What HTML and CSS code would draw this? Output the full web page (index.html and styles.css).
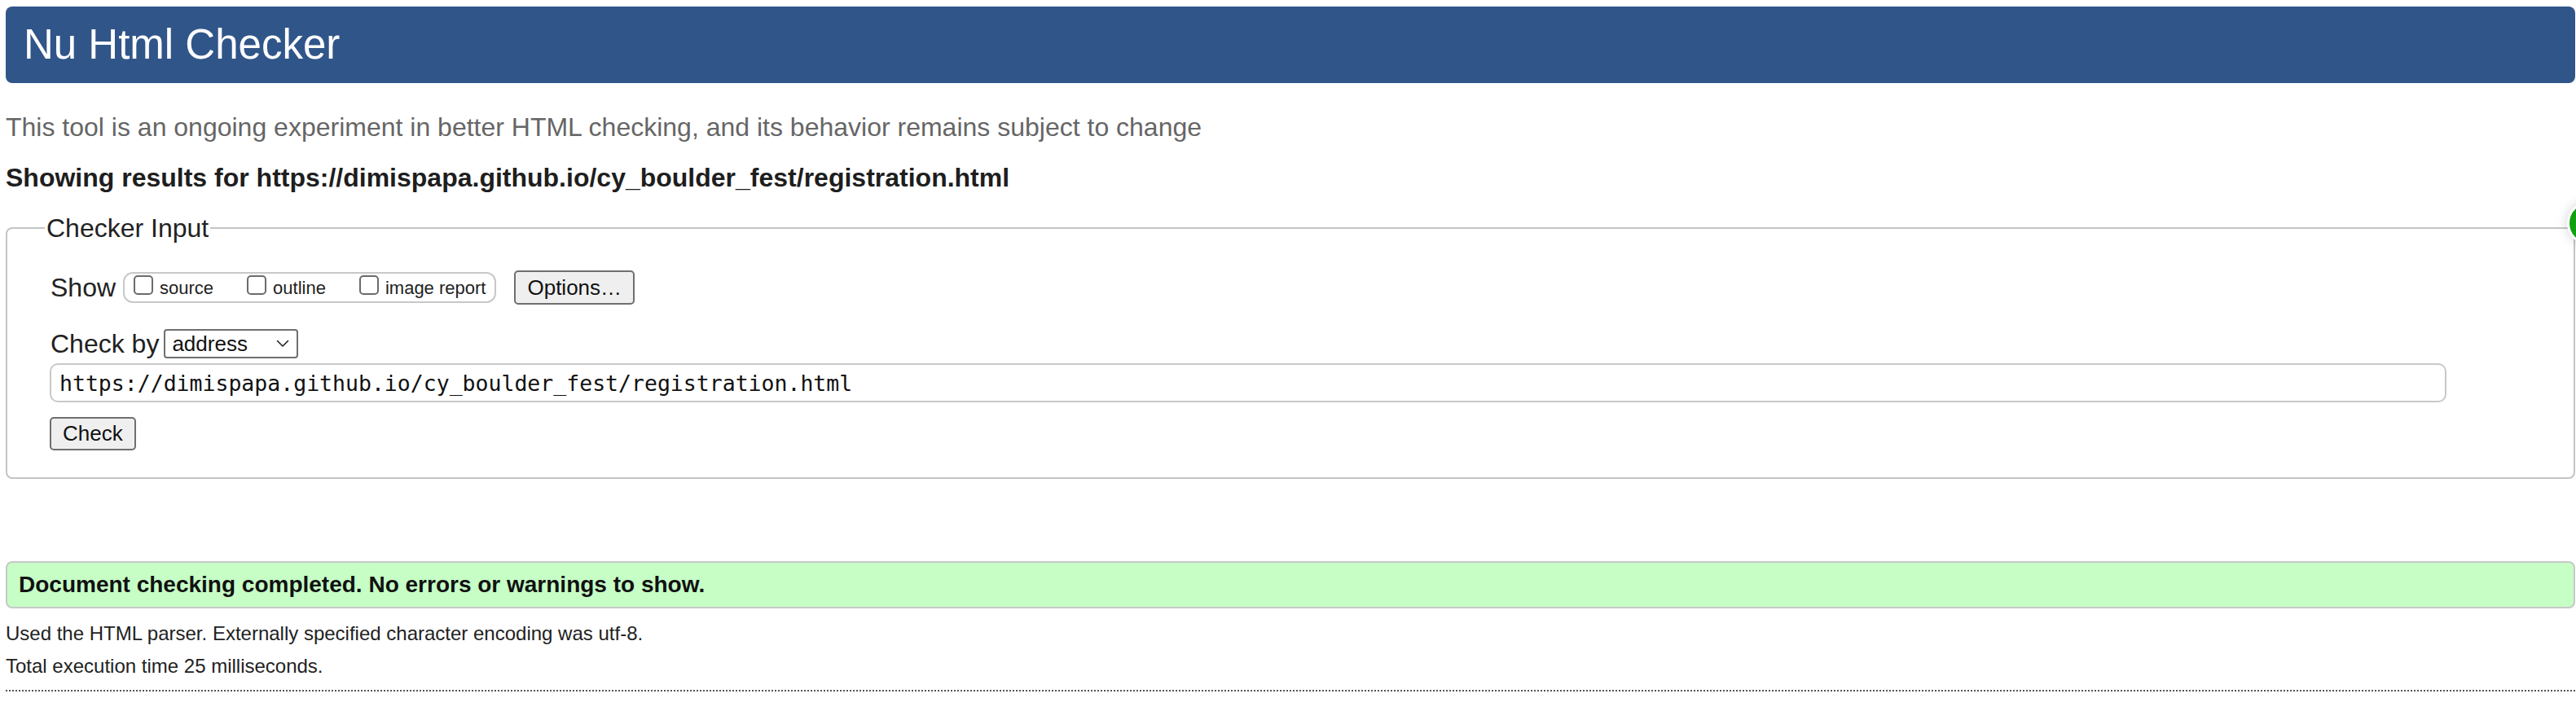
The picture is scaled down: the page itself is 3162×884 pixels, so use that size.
FILE: index.html
```html
<!DOCTYPE html>
<html lang="en">
<head>
<meta charset="utf-8">
<title>Showing results for https://dimispapa.github.io/cy_boulder_fest/registration.html - Nu Html Checker</title>
<link rel="stylesheet" href="styles.css">
</head>
<body>
<div class="page">
  <h1 class="title">Nu Html Checker</h1>
  <p class="intro">This tool is an ongoing experiment in better HTML checking, and its behavior remains subject to change</p>
  <p class="results-for">Showing results for https://dimispapa.github.io/cy_boulder_fest/registration.html</p>
  <form class="checker">
    <fieldset class="checker-input">
      <legend class="legend">Checker Input</legend>
      <div class="show-row">
        <span class="label">Show</span>
        <span class="show-box">
          <label class="opt"><input type="checkbox" class="cb"><span>source</span></label>
          <label class="opt"><input type="checkbox" class="cb"><span>outline</span></label>
          <label class="opt"><input type="checkbox" class="cb"><span>image report</span></label>
        </span>
        <button type="button" class="btn options-btn">Options…</button>
      </div>
      <div class="checkby-row">
        <span class="label">Check by</span>
        <span class="select-wrap">
          <select class="select"><option>address</option></select>
          <svg class="chev" width="16" height="10" viewBox="0 0 16 10"><path d="M1.5 1.5 L8 8 L14.5 1.5" fill="none" stroke="#222" stroke-width="1.6" stroke-linecap="round" stroke-linejoin="round"/></svg>
        </span>
      </div>
      <input class="url" type="url" value="https://dimispapa.github.io/cy_boulder_fest/registration.html">
      <div class="submit-row"><button type="button" class="btn check-btn">Check</button></div>
    </fieldset>
  </form>
  <p class="success">Document checking completed. No errors or warnings to show.</p>
  <p class="details first">Used the HTML parser. Externally specified character encoding was utf-8.</p>
  <p class="details">Total execution time 25 milliseconds.</p>
  <hr class="dotted">
</div>
<div class="fab"></div>
</body>
</html>
```
FILE: styles.css
```css
html, body {
  margin: 0;
  background: #fff;
}
body {
  font-family: "Liberation Sans", Arial, Helvetica, sans-serif;
  color: #222;
  overflow: hidden;
}
.page {
  padding: 8px 1px 0 7px;
}
.title {
  margin: 0;
  height: 94px;
  line-height: 94px;
  padding-left: 22px;
  background: #305589;
  color: #fff;
  font-size: 51px;
  font-weight: normal;
  border-radius: 8px;
}
.intro {
  margin: 34px 0 0;
  font-size: 32px;
  line-height: 40px;
  color: #666;
}
.results-for {
  margin: 22px 0 0;
  font-size: 32px;
  line-height: 40px;
  font-weight: bold;
  color: #1e1e1e;
}
.checker {
  margin: 22px 0 0;
}
.checker-input {
  margin: 0;
  min-width: 0;
  border: 2px solid #c4c4c4;
  border-radius: 8px;
  padding: 32px 0 33px 53px;
}
.legend {
  font-size: 32px;
  line-height: 40px;
  padding: 0 2px;
  margin-left: -7px;
  color: #222;
}
.label {
  font-size: 32px;
  color: #222;
}
.show-row {
  display: flex;
  align-items: center;
  height: 42px;
}
.show-box {
  display: flex;
  align-items: center;
  height: 38px;
  box-sizing: border-box;
  margin-left: 9px;
  border: 2px solid #c8c8c8;
  border-radius: 12px;
  padding: 0 11px;
  font-size: 22px;
  line-height: 25px;
}
.opt {
  display: flex;
  align-items: center;
  margin-right: 41px;
  color: #222;
}
.opt:last-child {
  margin-right: 0;
}
.cb {
  appearance: none;
  -webkit-appearance: none;
  width: 24px;
  height: 24px;
  margin: 0 8px 6px 0;
  box-sizing: border-box;
  border: 2px solid #6b6b6b;
  border-radius: 5px;
  background: #fff;
}
.btn {
  box-sizing: border-box;
  font-family: "Liberation Sans", Arial, Helvetica, sans-serif;
  font-size: 26px;
  color: #111;
  background: #efefef;
  border: 2px solid #6f6f6f;
  border-radius: 5px;
  padding: 0 14px;
}
.options-btn {
  margin-left: 22px;
  height: 42px;
}
.checkby-row {
  display: flex;
  align-items: center;
  margin-top: 30px;
  height: 36px;
}
.select-wrap {
  position: relative;
  margin-left: 6px;
  display: flex;
}
.select {
  appearance: none;
  -webkit-appearance: none;
  width: 165px;
  height: 36px;
  box-sizing: border-box;
  border: 2px solid #6f6f6f;
  border-radius: 4px;
  background: #fff;
  padding: 0 0 0 8px;
  font-family: "Liberation Sans", Arial, Helvetica, sans-serif;
  font-size: 26px;
  color: #111;
}
.chev {
  position: absolute;
  right: 11px;
  top: 13px;
}
.url {
  display: block;
  width: 95%;
  height: 48px;
  box-sizing: border-box;
  margin: 6px 0 0 -1px;
  border: 2px solid #c8c8c8;
  border-radius: 10px;
  padding: 0 10px;
  font-family: "DejaVu Sans Mono", "Liberation Mono", monospace;
  font-size: 26.5px;
  color: #111;
  background: #fff;
}
.submit-row {
  display: flex;
  margin-top: 18px;
  margin-left: -1px;
}
.check-btn {
  height: 41px;
}
.success {
  margin: 101px 0 0;
  height: 58px;
  box-sizing: border-box;
  border: 2px solid #c8c8c8;
  border-radius: 8px;
  background: #c6fec6;
  line-height: 54px;
  padding-left: 14px;
  font-size: 28px;
  font-weight: bold;
  color: #111;
}
.details {
  margin: 10px 0 0;
  font-size: 24px;
  line-height: 30px;
  color: #222;
}
.details.first {
  margin-top: 16px;
}
.dotted {
  margin: 14px 0 0;
  height: 0;
  border: 0;
  border-top: 2px dotted #555;
}
.fab {
  position: absolute;
  left: 3151px;
  top: 247px;
  width: 54px;
  height: 54px;
  box-sizing: border-box;
  border: 3px solid #fff;
  border-radius: 50%;
  background: #10a010;
  box-shadow: 0 0 14px rgba(0, 0, 0, 0.18);
}
```
